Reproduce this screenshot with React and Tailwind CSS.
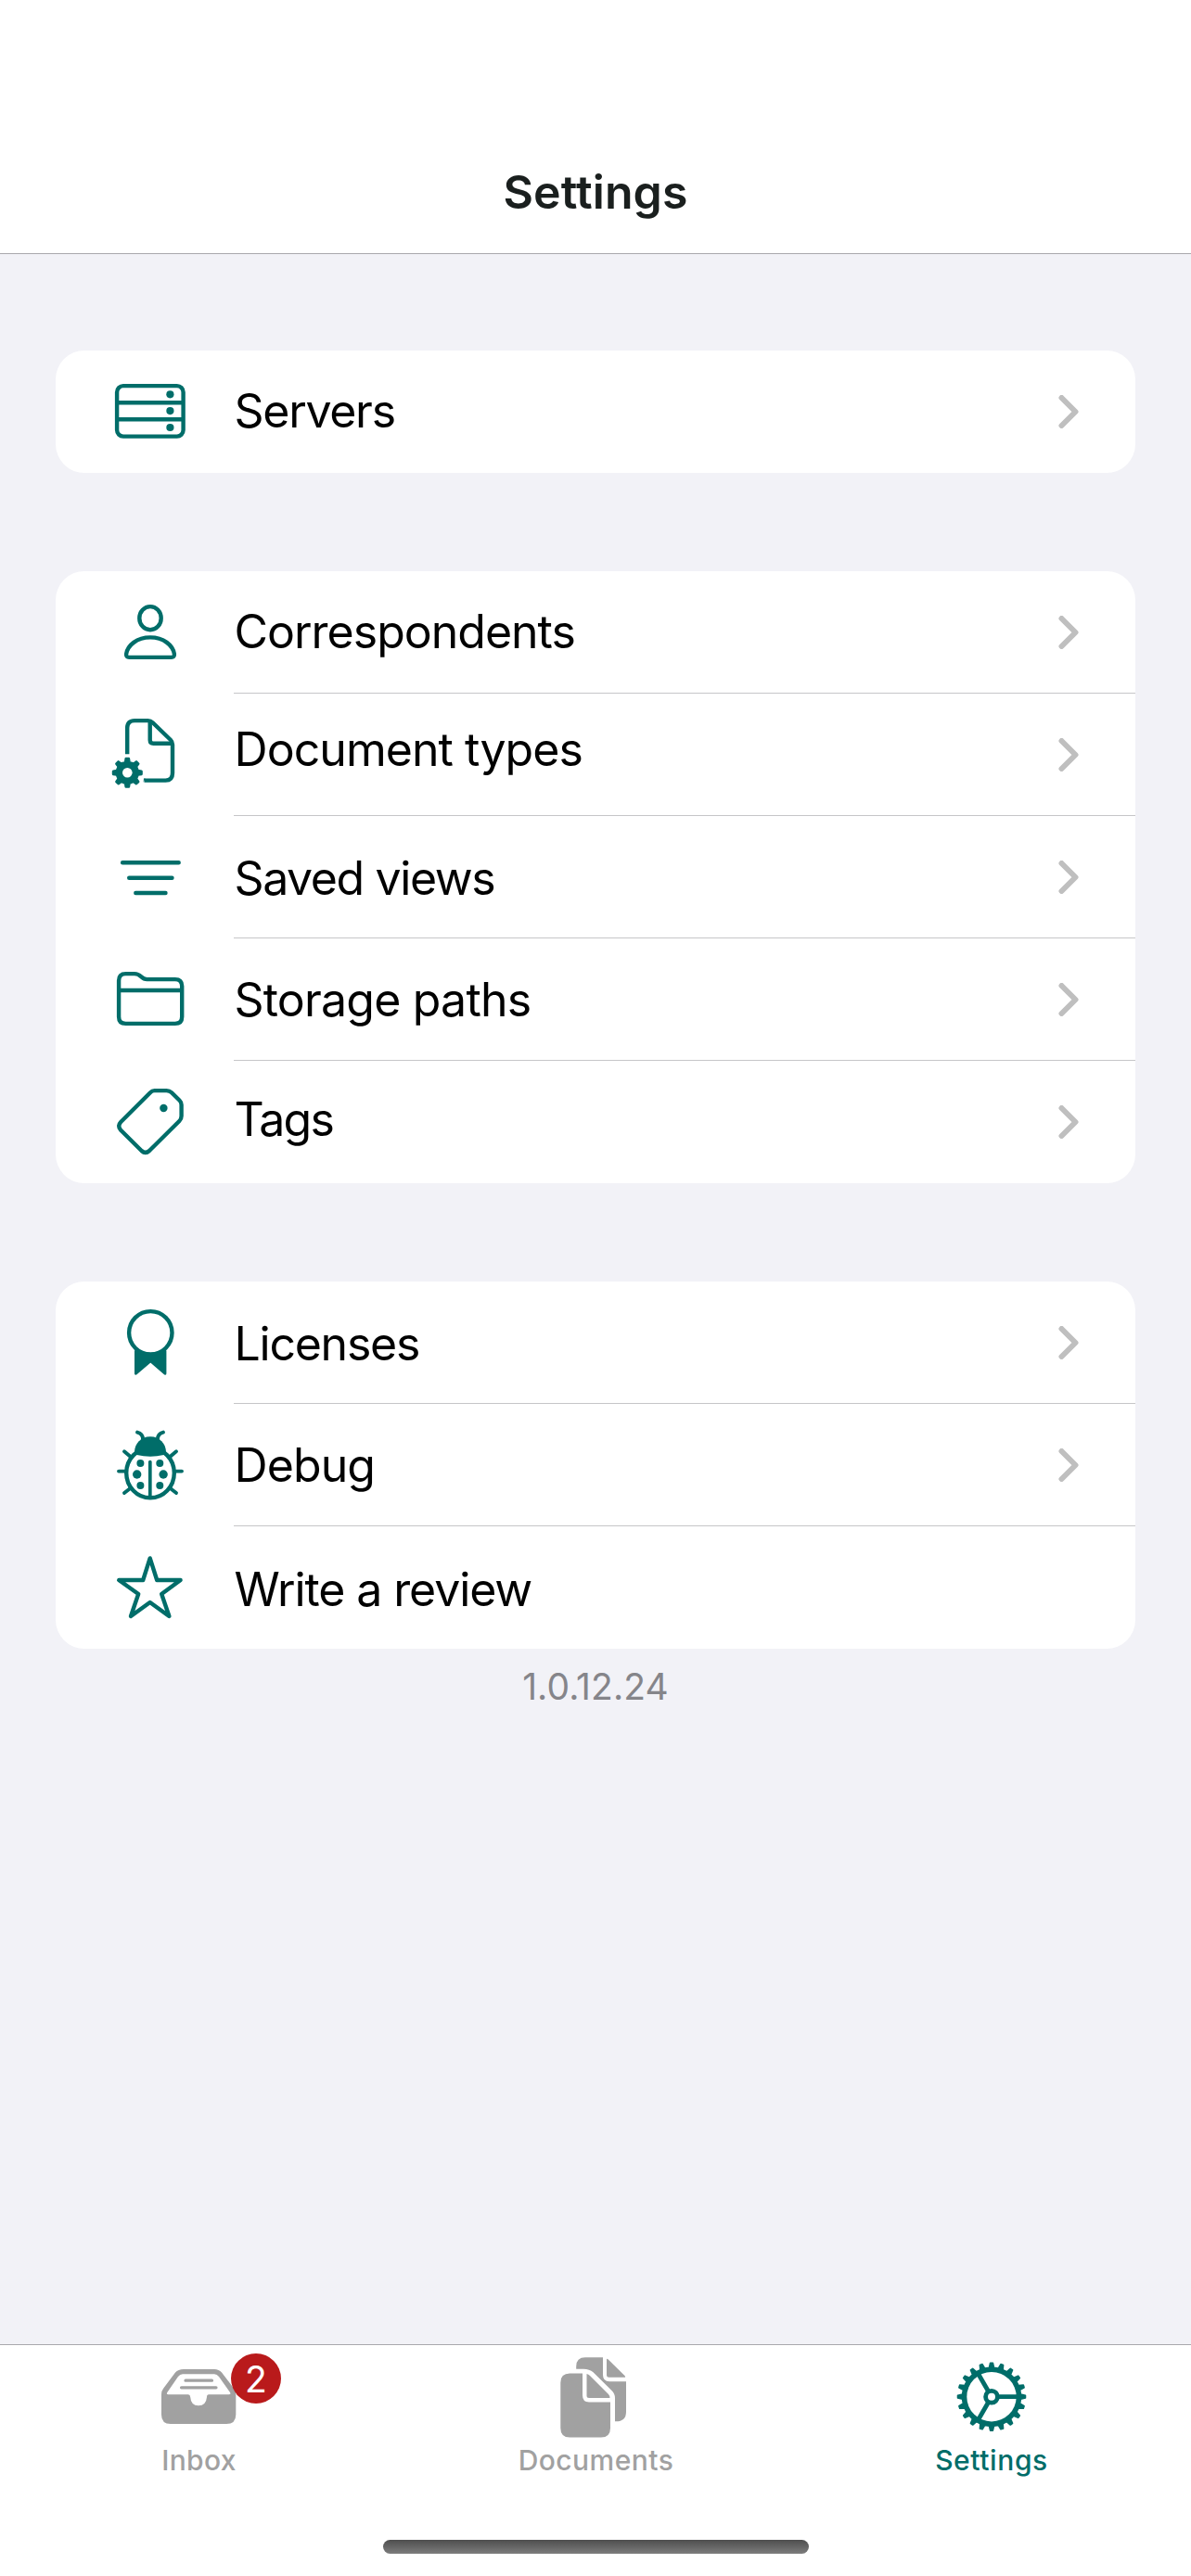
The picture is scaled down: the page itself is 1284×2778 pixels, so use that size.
const TEAL = "#006d69";

function Icon({ children }) {
  return (
    <svg viewBox="0 0 90 90" className="h-[90px] w-[90px] shrink-0 overflow-visible" fill="none" stroke={TEAL} strokeWidth="4.4" strokeLinecap="round" strokeLinejoin="round">
      {children}
    </svg>
  );
}

const gearPoints = (cx, cy, teeth, outer, inner, tip, root) => {
  const pts = [];
  const step = (Math.PI * 2) / teeth;
  for (let i = 0; i < teeth; i++) {
    const a = i * step;
    for (const [r, o] of [[inner, -root], [outer, -tip], [outer, tip], [inner, root]]) {
      pts.push(`${(cx + r * Math.cos(a + o * step)).toFixed(2)},${(cy + r * Math.sin(a + o * step)).toFixed(2)}`);
    }
  }
  return pts.join(" ");
};

const icons = {
  servers: (
    <Icon>
      <rect x="9.1" y="17.1" width="71.5" height="54.5" rx="6.8" />
      <path d="M9 35.3H81M9 53.3H81" strokeLinecap="butt" />
      <g fill={TEAL} stroke="none">
        <circle cx="66.4" cy="26.3" r="4.1" />
        <circle cx="66.4" cy="44.1" r="4.1" />
        <circle cx="66.4" cy="62" r="4.1" />
      </g>
    </Icon>
  ),
  person: (
    <Icon>
      <ellipse cx="45" cy="29.7" rx="11.7" ry="12.6" />
      <path d="M22.300 71.900H67.700C70.200 71.900 71.200 70.500 70.900 68.300C69.500 59 59.500 50.400 45 50.400S20.500 59 19.100 68.300C18.800 70.500 19.800 71.900 22.300 71.900Z" />
    </Icon>
  ),
  docgear: (
    <Icon>
      <path d="M20.200 44.300V16Q20.200 8.100 28.100 8.100H42.500Q45.500 8.100 47.600 10.200L67 29Q69 31 69 34V64.700Q69 72.600 61.500 72.600H38.500" strokeLinecap="butt" />
      <path d="M44.700 9V29Q44.700 32.700 48.400 32.700H68.500" strokeLinecap="butt" />
      <path d="M37.600 74.700L39.600 70.500H38Z" fill={TEAL} stroke="none" />
      <polygon points={gearPoints(20.3, 64.300, 8, 15.300, 11.600, 0.13, 0.24)} fill={TEAL} strokeWidth="2.600" />
      <circle cx="20.300" cy="64.300" r="5.300" fill="white" stroke="none" />
    </Icon>
  ),
  filter: (
    <Icon>
      <path d="M15.100 29.200H75.700M22.200 45.700H68.500M29.300 62H61.500" />
    </Icon>
  ),
  folder: (
    <Icon>
      <path d="M11.100 63.500V24.500Q11.100 17.100 18.500 17.100H28C35.500 17.100 34.500 23.100 41.500 23.100H71.800Q79.200 23.100 79.200 30.500V63.500Q79.200 70.900 71.800 70.900H18.500Q11.100 70.900 11.100 63.500Z" />
      <path d="M11 35H79" strokeLinecap="butt" />
    </Icon>
  ),
  tag: (
    <Icon>
      <path d="M49.500 11.100H62.500Q65.800 11.100 68 13.300L76.400 21.500Q78.600 23.700 78.600 26.500V38.500Q78.600 41.800 76.300 44L44 76Q39.800 79.800 35.600 76L13.200 53.700Q9.200 49.300 13.200 45L45 13.200Q47 11.100 49.500 11.100Z" />
      <circle cx="59.400" cy="30" r="4.200" fill={TEAL} stroke="none" />
    </Icon>
  ),
  rosette: (
    <Icon>
      <circle cx="45.300" cy="34.300" r="23.200" />
      <path d="M29.500 54Q45.300 61 60.900 54V78.200L45.300 64.500L29.500 78.200Z" fill={TEAL} strokeWidth="3" />
    </Icon>
  ),
  ladybug: (
    <Icon>
      <ellipse cx="45" cy="53.400" rx="25.800" ry="26.900" />
      <path d="M28 31C28 22 35 14.300 45 14.300S62 22 62 31Q62 33.400 59.500 34Q45 37.400 30.500 34Q28 33.400 28 31Z" fill={TEAL} stroke="none" />
      <path d="M31 9.600Q37 11 37 17M59 9.600Q53 11 53 17M17 30.300L23.500 35.800M73 30.300L66.500 35.800M11 51.600H18M79 51.600H72M17 75L23.500 70M73 75L66.500 70" strokeWidth="3.900" />
      <path d="M44.800 41.500V79" strokeWidth="3.700" />
      <g fill={TEAL} stroke="none">
        <circle cx="34.400" cy="43" r="4" />
        <circle cx="55.300" cy="43" r="4" />
        <circle cx="30.700" cy="55" r="4.700" />
        <circle cx="59.100" cy="55" r="4.700" />
        <circle cx="34.400" cy="67" r="4" />
        <circle cx="55.300" cy="67" r="4" />
      </g>
    </Icon>
  ),
  star: (
    <Icon>
      <path d="M44.700 13.400L52.200 37H77.600L57.200 52L65.400 76L44.700 61L24 76L32.200 52L11.200 37H37.200Z" />
    </Icon>
  ),
};

const groups = [
  [["servers", "Servers", "pb-[2px] tracking-[-1.3px]"]],
  [
    ["person", "Correspondents", "pb-[1px] tracking-[-1px]"],
    ["docgear", "Document types", "pb-[12px] tracking-[-0.95px]"],
    ["filter", "Saved views", "pt-[2px] tracking-[-1.4px]"],
    ["folder", "Storage paths", "pt-[1px] tracking-[-0.8px]"],
    ["tag", "Tags", "pb-[7px] tracking-[-1.8px]"],
  ],
  [
    ["rosette", "Licenses", "pt-[2px] tracking-[-1.25px]"],
    ["ladybug", "Debug", "pt-0 tracking-[-0.9px]"],
    ["star", "Write a review", "pt-[3px] tracking-[-1.1px]"],
  ],
];

function Row({ item, last }) {
  const [icon, label, nudge] = item;
  return (
    <li className="flex h-[132px] items-center pl-[57px]">
      {icons[icon]}
      <div className={`ml-[45px] flex h-full flex-1 items-center justify-between pr-[61.5px] pl-[0.5px] ${last ? "" : "border-b border-[#c6c6c8]"}`}>
        <span className={`text-[50px] leading-[60px] text-black ${nudge}`}>{label}</span>
        {icon !== "star" && (
          <svg viewBox="0 0 22 36" className="h-9 w-[22px]" fill="none" stroke="#bfbfbf" strokeWidth="6" strokeLinecap="round" strokeLinejoin="round">
            <path d="M3.500 3L18.500 18L3.500 33" />
          </svg>
        )}
      </div>
    </li>
  );
}

function Tab({ label, className, children }) {
  return (
    <div className={`flex flex-col items-center ${className}`}>
      <div className="relative h-[106px] w-[120px]">{children}</div>
      <span className="pl-px text-[30px] leading-[36px] font-medium">{label}</span>
    </div>
  );
}

export default function App() {
  return (
    <div className="flex h-[2778px] w-[1284px] flex-col bg-[#f2f2f7] font-['Inter',sans-serif]">
      <header className="flex h-[274px] items-end justify-center border-b border-[#a9a8ad] bg-white pb-[36px]">
        <h1 className="text-[50px] leading-[60px] font-semibold tracking-[0.1px] text-[#1a1f1e]">Settings</h1>
      </header>
      <main className="flex-1 px-[60px] pt-[104px]">
        <div className="flex flex-col gap-[106px]">
          {groups.map((g, i) => (
            <ul key={i} className="rounded-[31px] bg-white">
              {g.map((item, j) => (
                <Row key={item[1]} item={item} last={j === g.length - 1} />
              ))}
            </ul>
          ))}
        </div>
        <p className="mt-[17px] text-center text-[39px] leading-[48px] tracking-[0.1px] text-[#85858a]">1.0.12.24</p>
      </main>
      <footer className="flex h-[250px] flex-col items-center border-t border-[#a9a8ad] bg-white">
        <nav className="flex w-full">
          <Tab label="Inbox" className="w-[428px] tracking-[0.3px] text-[#a1a1a1]">
            <svg viewBox="0 0 120 106" className="h-full w-full" fill="currentColor">
              <path fillRule="evenodd" d="M44 26H77Q82 26 85 29.500L98 46.500Q100.300 49.500 100.300 53V75Q100.300 85 90 85H30Q20 85 20 75V53Q20 49.500 22.300 46.500L35 29.500Q38 26 44 26ZM43 31.300Q40 31.300 38 34L26.300 51Q25 53.200 27.500 53.200H49Q51 53.200 51.200 56Q51.800 65.300 60 65.300T69 56Q69 53.200 71 53.200H92.800Q95.300 53.200 94 51L82 34Q80 31.300 77 31.300Z" />
              <path d="M46 38.200H74.500M41.500 45.800H79" stroke="currentColor" strokeWidth="3.200" strokeLinecap="round" />
            </svg>
            <span className="absolute top-[9px] left-[95px] flex size-[54px] items-center justify-center rounded-full bg-[#b91a1b] text-[39px] leading-none tracking-normal text-white">2</span>
          </Tab>
          <Tab label="Documents" className="w-[428px] tracking-[0.45px] text-[#a1a1a1]">
            <svg viewBox="0 0 120 106" className="h-full w-full overflow-visible" fill="currentColor">
              <path d="M39.200 25.800V23Q39.200 13.200 49 13.200H68V32Q68 39.300 75 39.300H93V72Q93 82.300 82 82.300H81V57Q81 52.500 77.500 49L57.500 29.300Q53.500 25.800 47 25.800Z" />
              <path d="M72 15.500Q72 14 73.500 15.300L91.500 33Q93 34.800 91 34.800H74.500Q72 34.800 72 32.500Z" />
              <path d="M33 30.500H46V54Q46 61.500 53 61.500H76V89.500Q76 99.500 66 99.500H32.300Q22.300 99.500 22.300 89.500V40.500Q22.300 30.500 32.300 30.500Z" />
              <path d="M50.500 31Q52.500 31.500 54 33L74 53Q76 55.500 75.500 57H53Q50.500 57 50.500 54.500Z" />
            </svg>
          </Tab>
          <Tab label="Settings" className="w-[425px] tracking-[0.6px] text-[#006d69]">
            <svg viewBox="0 0 120 106" className="h-full w-full" fill="none" stroke="currentColor">
              <polygon points={gearPoints(60, 55.700, 20, 36.500, 31.500, 0.12, 0.26)} fill="currentColor" strokeWidth="1.600" strokeLinejoin="round" />
              <circle cx="60" cy="55.700" r="26.700" fill="white" stroke="none" />
              <circle cx="60" cy="55.700" r="6.400" strokeWidth="4.800" />
              <path d="M67.500 55.700H88M56.200 49.200L45.800 31.200M56.200 62.200L45.800 80.200" strokeWidth="4.800" />
            </svg>
          </Tab>
        </nav>
        <div className="mt-[68px] h-[15px] w-[459px] rounded-full bg-linear-to-b from-[#4e4e4e] to-[#7d7d7d]" />
      </footer>
    </div>
  );
}
